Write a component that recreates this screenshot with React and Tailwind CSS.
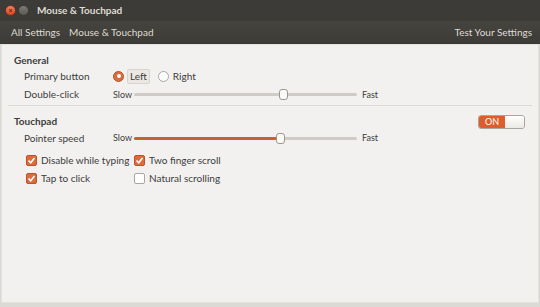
import React from 'react';

const Check = () => (
    <span className="w-[11px] h-[11px] rounded-[2px] bg-[#dd6c3c] border border-[#b9532a] flex items-center justify-center">
        <svg width="9" height="9" viewBox="0 0 9 9">
            <path d="M1.5 4.5 L3.7 6.7 L7.5 2" stroke="#fff" strokeWidth="1.6" fill="none" />
        </svg>
    </span>
);

const Empty = () => (
    <span className="w-[11px] h-[11px] rounded-[2px] bg-white border border-[#a9a69f]" />
);

const Slider = ({ pos, filled }) => (
    <div className="flex items-center gap-[4px] text-[9px] text-[#3c3c3c]">
        <span className="w-[17px]">Slow</span>
        <div className="relative w-[223px] h-[3px] rounded-full bg-[#cfccc6]">
            {filled && <div className="absolute left-0 top-0 h-[3px] rounded-full bg-[#c4603a]" style={{ width: pos }} />}
            <div className="absolute top-[-4px] w-[9px] h-[11px] rounded-[3px] bg-[#fbfaf9] border border-[#9b9891]" style={{ left: pos - 4 }} />
        </div>
        <span className="ml-[1px]">Fast</span>
    </div>
);

const Box = ({ checked, label }) => (
    <div className="flex items-center gap-[4px] h-[16px] whitespace-nowrap">
        {checked ? <Check /> : <Empty />}
        <span>{label}</span>
    </div>
);

export default function App() {
    return (
        <div className="w-[540px] h-[307px] flex flex-col bg-[#dcdad5] text-[10px] text-[#3c3c3c] overflow-hidden" style={{ fontFamily: 'Lato, "Open Sans", sans-serif' }}>
            <div className="h-[21px] flex items-center bg-[#3c3b37] pl-[5px]">
                <span className="w-[11px] h-[11px] rounded-full bg-gradient-to-b from-[#f2805a] to-[#d6471d] border border-[#6a3322] flex items-center justify-center text-[7px] leading-none text-[#5b2010] font-bold">×</span>
                <span className="ml-[2px] w-[11px] h-[11px] rounded-full bg-gradient-to-b from-[#7d7b75] to-[#5a5954] border border-[#3a3935]" />
                <span className="ml-[8px] font-bold text-[10px] text-[#dfdbd2]">Mouse &amp; Touchpad</span>
            </div>
            <div className="h-[23px] flex items-center justify-between px-[11px] bg-gradient-to-b from-[#45443f] to-[#3c3b37] text-[10px] text-[#dfdbd2]">
                <div className="flex gap-[9px]">
                    <span>All Settings</span>
                    <span>Mouse &amp; Touchpad</span>
                </div>
                <span className="mr-[-3px]">Test Your Settings</span>
            </div>
            <div className="flex-1 mx-[1px] mb-[4px] bg-[#f2f1ef] border border-[#e3e1dd] px-[12px] pt-[7px]">
                <div className="font-bold leading-[16px]">General</div>
                <div className="flex items-center h-[16px] pl-[10px]">
                    <span className="w-[89px]">Primary button</span>
                    <div className="flex items-center gap-[3px]">
                        <span className="w-[11px] h-[11px] rounded-full bg-[#dd6c3c] border border-[#b9532a] flex items-center justify-center">
                            <span className="w-[4px] h-[4px] rounded-full bg-white" />
                        </span>
                        <span className="px-[2px] bg-[#ebe8e3] border border-[#d9d5ce] rounded-[2px] leading-[13px]">Left</span>
                    </div>
                    <div className="flex items-center gap-[4px] ml-[8px]">
                        <span className="w-[11px] h-[11px] rounded-full bg-white border border-[#a9a69f]" />
                        <span>Right</span>
                    </div>
                </div>
                <div className="flex items-center h-[21px] pl-[10px]">
                    <span className="w-[89px]">Double-click</span>
                    <Slider pos={149} filled={false} />
                </div>
                <div className="h-px bg-[#dcdad5] mx-[-6px]" />
                <div className="flex items-center justify-between mt-[8px] h-[15px]">
                    <span className="font-bold">Touchpad</span>
                    <div className="flex w-[47px] h-[14px] rounded-[3px] border border-[#a9a69f] overflow-hidden mr-[1px]">
                        <span className="w-[26px] bg-[#dd5e2c] text-white text-[9px] flex items-center justify-center">ON</span>
                        <span className="flex-1 bg-gradient-to-b from-white to-[#ebe9e6]" />
                    </div>
                </div>
                <div className="flex items-center h-[18px] pl-[10px]">
                    <span className="w-[89px]">Pointer speed</span>
                    <Slider pos={146} filled={true} />
                </div>
                <div className="grid grid-cols-[108px_1fr] mt-[5px] pl-[12px] gap-y-[2px]">
                    <Box checked label="Disable while typing" />
                    <Box checked label="Two finger scroll" />
                    <Box checked label="Tap to click" />
                    <Box checked={false} label="Natural scrolling" />
                </div>
            </div>
        </div>
    );
}
